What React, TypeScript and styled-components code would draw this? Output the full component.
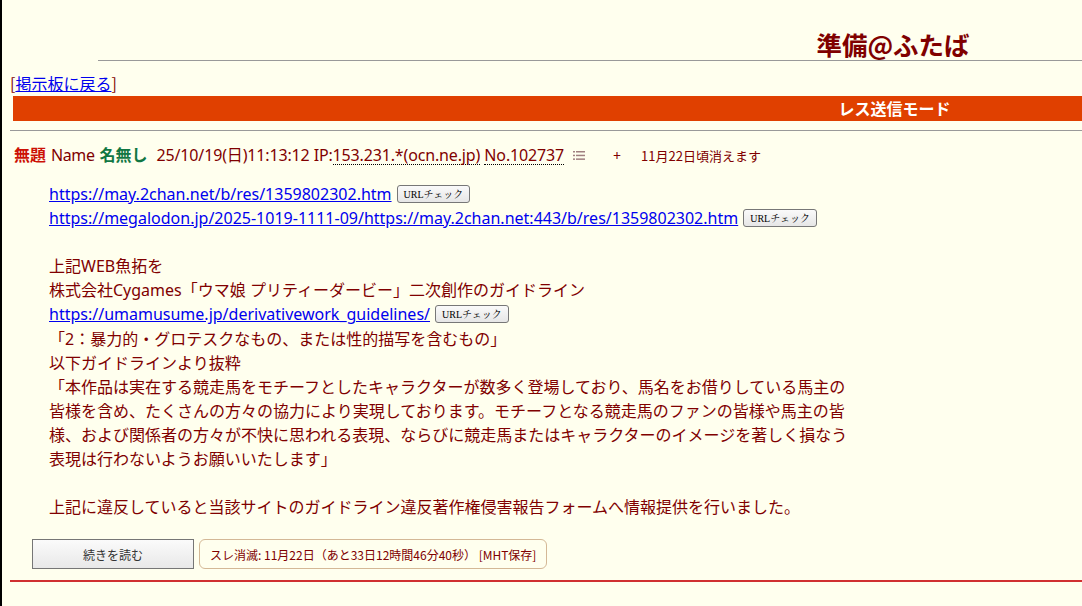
import React from 'react';
import styled, { createGlobalStyle } from 'styled-components';

const GlobalStyle = createGlobalStyle`
  html {
    min-height: 100%;
    background: #ffffee;
    border-left: 2px solid #000;
    overflow: hidden;
  }
  body {
    margin: 0;
    background: #ffffee;
    color: #800000;
    font-family: "Noto Sans", "Noto Sans CJK JP", sans-serif;
    font-size: 16px;
  }
`;

const Page = styled.div`
  width: 1766px;
  margin-left: 8px;
  padding-top: 28px;
`;

const Title = styled.h1`
  margin: 0;
  text-align: center;
  font-size: 25.5px;
  line-height: 32px;
  font-weight: bold;
  color: #800000;
  font-family: "Noto Sans CJK JP", sans-serif;
`;

const Rule = styled.hr<{ $w?: string }>`
  width: ${(p) => p.$w || '100%'};
  margin: 0 auto;
  border: 0;
  border-top: 1px solid #999;
  height: 0;
`;

const BackLine = styled.div`
  margin-top: 11px;
  line-height: 22px;
  font-size: 16px;
  color: #800000;
  font-family: "Noto Sans CJK JP", sans-serif;
  a {
    color: #0000ee;
    text-decoration: underline;
  }
`;

const ModeBar = styled.div`
  margin: 2px 0 9px 3px;
  height: 25px;
  background: #e04000;
  color: #fff;
  font-weight: bold;
  text-align: center;
  font-size: 16px;
  line-height: 25px;
  font-family: "Noto Sans CJK JP", sans-serif;
`;

const Post = styled.div`
  padding: 12px 0 0 4px;
`;

const PostHead = styled.div`
  display: flex;
  align-items: baseline;
  white-space: nowrap;
  line-height: 24px;
`;

const Subject = styled.span`
  color: #cc1105;
  font-weight: bold;
  margin-right: 5px;
`;

const NameLabel = styled.span`
  margin-right: 5px;
  letter-spacing: -0.4px;
`;

const Poster = styled.span`
  color: #117743;
  font-weight: bold;
  margin-right: 9px;
`;

const Stamp = styled.span`
  letter-spacing: -0.15px;
`;

const Dotted = styled.span`
  border-bottom: 1px dotted #000;
  line-height: 18px;
  letter-spacing: -0.15px;
`;

const MenuIcon = styled.svg`
  margin: 0 0 0 9px;
  align-self: center;
`;

const Plus = styled.span`
  margin-left: 28px;
  font-size: 14px;
`;

const Expire = styled.span`
  margin-left: 20px;
  font-size: 13px;
  font-family: "Noto Sans CJK JP", sans-serif;
`;

const Body = styled.blockquote`
  margin: 14px 0 0 35px;
  width: 802px;
  line-height: 24.1px;
  font-size: 16px;
  a {
    color: #0000ee;
    text-decoration: underline;
  }
`;

const CheckButton = styled.button`
  margin-left: 5px;
  height: 18px;
  padding: 0 6px;
  font-family: "Liberation Serif", "Noto Serif CJK JP", serif;
  font-size: 10px;
  color: #000;
  background: linear-gradient(#fafafa, #e6e6e6);
  border: 1px solid #777;
  border-radius: 3px;
  vertical-align: 2px;
`;

const Footer = styled.div`
  display: flex;
  align-items: center;
  gap: 5px;
  margin: 20px 0 0 18px;
`;

const MoreButton = styled.button`
  width: 162px;
  height: 30px;
  font-size: 12px;
  color: #333;
  font-family: "Noto Sans CJK JP", sans-serif;
  background: linear-gradient(#fbfbfb, #e8e8e8);
  border: 1px solid #767676;
  border-radius: 0;
`;

const ExpireBox = styled.div`
  height: 28px;
  padding: 0 10px;
  display: flex;
  align-items: center;
  font-size: 12px;
  color: #800000;
  font-family: "Noto Sans CJK JP", sans-serif;
  border: 1px solid #d4b896;
  border-radius: 6px;
`;

const EndRule = styled.div`
  margin: 11px 0 0 0;
  border-top: 2px solid #d03030;
`;

const Check = () => <CheckButton>URLチェック</CheckButton>;

export default function App() {
  return (
    <>
      <GlobalStyle />
      <Page>
        <Title>準備@ふたば</Title>
        <Rule $w="90%" />
        <BackLine>
          [<a href="#">掲示板に戻る</a>]
        </BackLine>
        <ModeBar>レス送信モード</ModeBar>
        <Rule />
        <Post>
          <PostHead>
            <Subject>無題</Subject>
            <NameLabel>Name</NameLabel>
            <Poster>名無し</Poster>
            <Stamp>25/10/19(日)11:13:12 IP:</Stamp>
            <Dotted>153.231.*(ocn.ne.jp)</Dotted>
            <span>&nbsp;</span>
            <Dotted>No.102737</Dotted>
            <MenuIcon width="12" height="11" viewBox="0 0 12 11">
              <g fill="#a08080">
                <rect x="0" y="1" width="2" height="1.5" />
                <rect x="3" y="1" width="9" height="1.5" />
                <rect x="0" y="4.7" width="2" height="1.5" />
                <rect x="3" y="4.7" width="9" height="1.5" />
                <rect x="0" y="8.4" width="2" height="1.5" />
                <rect x="3" y="8.4" width="9" height="1.5" />
              </g>
            </MenuIcon>
            <Plus>+</Plus>
            <Expire>11月22日頃消えます</Expire>
          </PostHead>
          <Body>
            <a href="#">https://may.2chan.net/b/res/1359802302.htm</a>
            <Check />
            <br />
            <a href="#">https://megalodon.jp/2025-1019-1111-09/https://may.2chan.net:443/b/res/1359802302.htm</a>
            <Check />
            <br />
            <br />
            上記WEB魚拓を
            <br />
            株式会社Cygames「ウマ娘 プリティーダービー」二次創作のガイドライン
            <br />
            <a href="#">https://umamusume.jp/derivativework_guidelines/</a>
            <Check />
            <br />
            「2：暴力的・グロテスクなもの、または性的描写を含むもの」
            <br />
            以下ガイドラインより抜粋
            <br />
            「本作品は実在する競走馬をモチーフとしたキャラクターが数多く登場しており、馬名をお借りしている馬主の皆様を含め、たくさんの方々の協力により実現しております。モチーフとなる競走馬のファンの皆様や馬主の皆様、および関係者の方々が不快に思われる表現、ならびに競走馬またはキャラクターのイメージを著しく損なう表現は行わないようお願いいたします」
            <br />
            <br />
            上記に違反していると当該サイトのガイドライン違反著作権侵害報告フォームへ情報提供を行いました。
          </Body>
          <Footer>
            <MoreButton>続きを読む</MoreButton>
            <ExpireBox>スレ消滅: 11月22日（あと33日12時間46分40秒） [MHT保存]</ExpireBox>
          </Footer>
        </Post>
        <EndRule />
      </Page>
    </>
  );
}
